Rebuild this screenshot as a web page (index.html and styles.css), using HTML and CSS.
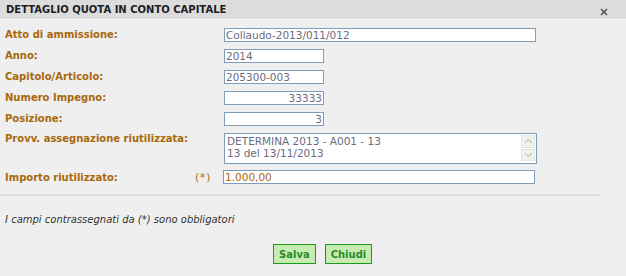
FILE: index.html
```html
<!DOCTYPE html>
<html lang="it">
<head>
<meta charset="utf-8">
<title>Dettaglio quota in conto capitale</title>
<link rel="stylesheet" href="styles.css">
</head>
<body>
<div class="dialog">
  <div class="titlebar">
    <span class="title">DETTAGLIO QUOTA IN CONTO CAPITALE</span>
    <span class="close"><svg width="8" height="8" viewBox="0 0 8 8"><path d="M1 1L7 7M7 1L1 7" stroke="#4a5560" stroke-width="1.6"/></svg></span>
  </div>
  <div class="content">
    <div class="row">
      <span class="label">Atto di ammissione:</span><span class="req"></span>
      <input class="field wide" value="Collaudo-2013/011/012">
    </div>
    <div class="row">
      <span class="label">Anno:</span><span class="req"></span>
      <input class="field small" value="2014">
    </div>
    <div class="row">
      <span class="label">Capitolo/Articolo:</span><span class="req"></span>
      <input class="field small" value="205300-003">
    </div>
    <div class="row">
      <span class="label">Numero Impegno:</span><span class="req"></span>
      <input class="field small num" value="33333">
    </div>
    <div class="row">
      <span class="label">Posizione:</span><span class="req"></span>
      <input class="field small num" value="3">
    </div>
    <div class="row tall">
      <span class="label">Provv. assegnazione riutilizzata:</span><span class="req"></span>
      <div class="area">
        <div class="area-text">DETERMINA 2013 - A001 - 13<br>13 del 13/11/2013</div>
        <div class="scroll">
          <span class="sbtn"><svg width="9" height="6" viewBox="0 0 9 6"><path d="M1 5L4.5 1.5L8 5" fill="none" stroke="#c5c8c0" stroke-width="1.3"/></svg></span>
          <span class="sbtn"><svg width="9" height="6" viewBox="0 0 9 6"><path d="M1 1L4.5 4.5L8 1" fill="none" stroke="#c5c8c0" stroke-width="1.3"/></svg></span>
        </div>
      </div>
    </div>
    <div class="row last">
      <span class="label">Importo riutilizzato:</span><span class="req">(*)</span>
      <input class="field wide amount" value="1.000,00">
    </div>
    <div class="sep"></div>
    <p class="note">I campi contrassegnati da (*) sono obbligatori</p>
    <div class="actions">
      <button class="btn">Salva</button>
      <button class="btn">Chiudi</button>
    </div>
  </div>
</div>
</body>
</html>
```
FILE: styles.css
```css
html, body {
  margin: 0;
  padding: 0;
  background: #efefef;
}
body {
  font-family: "DejaVu Sans", Verdana, sans-serif;
  font-size: 11px;
}
.dialog {
  width: 626px;
  height: 276px;
  background: #efefef;
}
.titlebar {
  height: 19px;
  background: #dcdcdc;
  border-bottom: 1px solid #f8f8f8;
  display: flex;
  align-items: center;
  justify-content: space-between;
  padding: 0 18px 0 6px;
}
.title {
  font-weight: bold;
  font-size: 10px;
  color: #1d1d24;
}
.close {
  display: flex;
  margin-top: 4px;
}
.content {
  padding: 4px 0 0 5px;
}
.row {
  display: flex;
  align-items: center;
  height: 21px;
}
.row.tall {
  align-items: flex-start;
  height: 37px;
  padding-top: 4px;
  box-sizing: border-box;
}
.row.last {
  height: 22px;
}
.label {
  width: 190px;
  font-weight: bold;
  font-size: 10px;
  color: #a8680c;
  white-space: nowrap;
}
.req {
  width: 29px;
  font-size: 10.5px;
  letter-spacing: 1px;
  color: #a8680c;
}
.field {
  box-sizing: border-box;
  height: 14px;
  border: 1px solid #7f9db9;
  background: #fff;
  font-family: "DejaVu Sans", Verdana, sans-serif;
  font-size: 10.5px;
  color: #6c6c80;
  padding: 0 1px;
  margin: 0;
  outline: none;
}
.wide { width: 312px; }
.small { width: 100px; }
.num { text-align: right; }
.amount {
  color: #a8680c;
  margin-left: -1px;
}
.area {
  box-sizing: border-box;
  width: 313px;
  height: 31px;
  border: 1px solid #7f9db9;
  background: #fff;
  display: flex;
}
.area-text {
  flex: 1;
  padding: 1px 0 0 2px;
  font-size: 10.5px;
  line-height: 12px;
  color: #6c6c80;
}
.scroll {
  width: 14px;
  display: flex;
  flex-direction: column;
  padding: 1px;
}
.sbtn {
  flex: 1;
  display: flex;
  align-items: center;
  justify-content: center;
  background: #f3f3ee;
  border: 1px solid #e4e4de;
  margin-bottom: 1px;
}
.sep {
  margin: 6px 0 0 -5px;
  width: 600px;
  height: 2px;
  background: #dcdee4;
}
.note {
  margin: 18px 0 0 0;
  font-style: italic;
  font-size: 10px;
  color: #333;
}
.actions {
  display: flex;
  gap: 9px;
  margin: 19px 0 0 268px;
}
.btn {
  height: 20px;
  box-sizing: border-box;
  border: 1px solid #1d9a1d;
  background: #c7ecb2;
  color: #2a8a2a;
  font-family: "DejaVu Sans", Verdana, sans-serif;
  font-weight: bold;
  font-size: 10px;
  padding: 0 5px;
  margin: 0;
}
```
